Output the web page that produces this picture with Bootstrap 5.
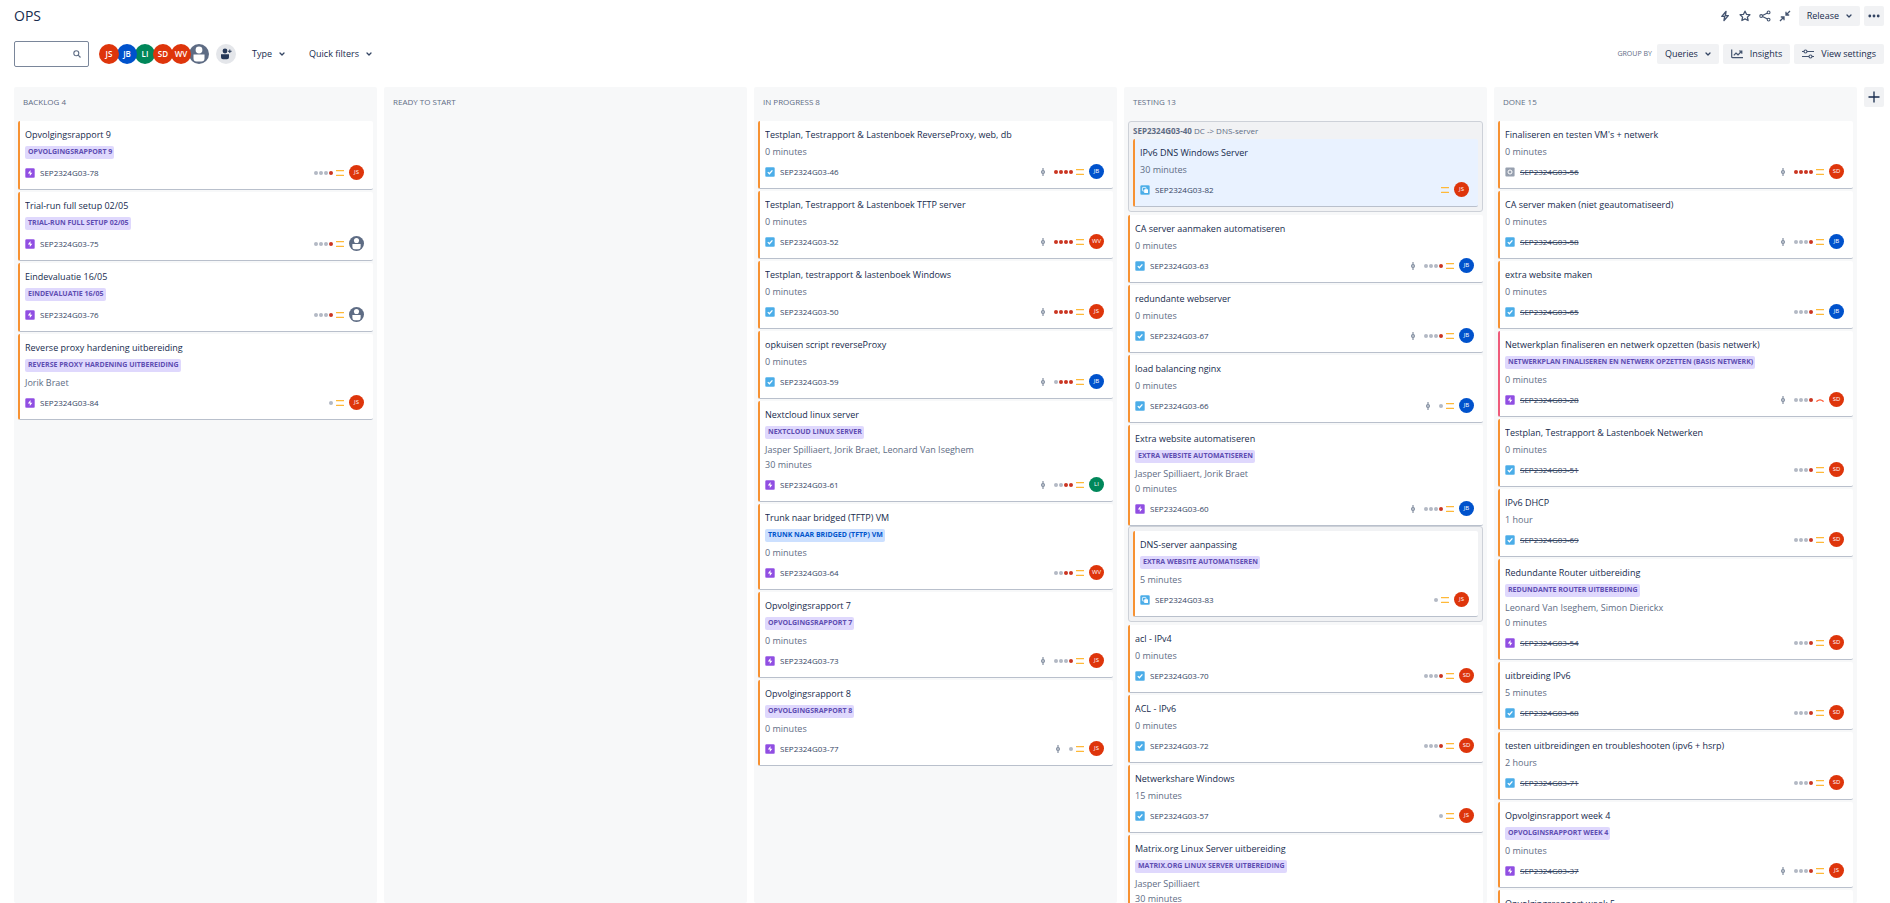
<!DOCTYPE html>
<html lang="en">
<head>
<meta charset="utf-8">
<meta name="viewport" content="width=device-width, initial-scale=1">
<title>OPS board</title>
<link href="https://cdn.jsdelivr.net/npm/bootstrap@5.3.0/dist/css/bootstrap.min.css" rel="stylesheet">
<style>
  :root { --ink: #172b4d; --muted: #5e6c84; --line: #b9c0cc; --surface: #f7f8f9; --button: #f1f2f4; }
  body { font-family: "Open Sans", "Noto Sans", sans-serif; font-size: 9px; line-height: 14px; color: var(--ink); background: #fff; }
  svg { display: block; flex: none; }
  .page { padding: 6px 6px 0 14px; }
  .board-title { font-size: 14px; line-height: 20px; font-weight: 400; }
  .tools { margin-top: 15px; height: 26px; }
  .search { width: 75px; height: 26px; border: 1px solid #7a869a; border-radius: 2px; padding: 0 7px 0 5px; }
  .search input { border: 0; outline: 0; min-width: 0; width: 100%; background: none; font-size: 9px; }
  .people { margin-left: 10px; }
  .face { width: 20px; height: 20px; border: 0; padding: 0; border-radius: 50%; color: #fff; font-size: 8px; line-height: 20px; font-weight: 600; text-align: center; position: relative; }
  .people .face + .face { margin-left: -2px; }
  .face-red { background: #de350b; } .face-blue { background: #0052cc; } .face-green { background: #00875a; } .face-none { background: #fff; }
  .add-person { width: 20px; height: 20px; margin-left: 7px; border: 0; padding: 0; border-radius: 50%; background: #e4e6ea; }
  .btn-tool { height: 20px; padding: 0 8px; gap: 7px; font-size: 9px; line-height: 20px; border: 0; border-radius: 2px; color: var(--ink); background: var(--button); }
  .btn-tool:hover { background: #dfe1e6; }
  .btn-clear { background: none; }
  .btn-square { width: 20px; padding: 0; }
  .btn-icon { width: 20px; height: 20px; padding: 0; border: 0; color: #44546f; }
  .group-label { font-size: 7px; color: var(--muted); margin-right: 5px; }
  .board { gap: 7px; margin-top: 20px; }
  .lane { flex: 1 1 0; min-width: 0; background: var(--surface); border-radius: 2px; padding: 0 4px; }
  .lane-title { font-size: 8px; line-height: 14px; font-weight: 400; color: var(--muted); margin: 0; padding: 8px 5px 12px; }
  .issue { display: flex; flex-direction: column; background: #fff; border-left: 2px solid #f79233; border-bottom: 1px solid var(--line); border-radius: 2px; padding: 7px 9px 9px 5px; margin-bottom: 2px; }
  .issue.high { border-left-color: #ef5c7b; }
  .issue.selected { background: #e9f2ff; }
  .issue-title { font-size: 9px; line-height: 14px; font-weight: 400; margin: 0; }
  .epic { align-self: flex-start; margin: 4px 0 1px; height: 13px; padding: 0 2px 0 3px; border-radius: 2px; font-size: 7px; line-height: 12px; font-weight: 700; text-transform: uppercase; background: #dfd8fd; color: #5e4db2; }
  .epic.blue { background: #cce0ff; color: #0055cc; }
  .facts { margin-top: 2px; color: var(--muted); line-height: 15px; }
  .issue-foot { margin-top: 5px; height: 15px; }
  .issue-key { margin-left: 5px; font-size: 8px; color: #344563; text-decoration: none; }
  .done .issue-key { text-decoration: line-through; }
  .days { gap: 1px; margin: 0 3px 0 8px; }
  .days i { width: 4px; height: 4px; border-radius: 50%; background: #b3b9c4; }
  .days i.old { background: #ca3521; }
  .issue-foot .face { width: 15px; height: 15px; margin-left: 5px; font-size: 6px; line-height: 15px; font-weight: 500; }
  .family { background: var(--button); border: 1px solid #cdd1d8; border-radius: 3px; padding: 0 4px 4px; margin-bottom: 3px; }
  .family .issue { margin-bottom: 0; }
  .family-title { font-size: 8px; line-height: 17px; color: var(--muted); margin: 0; }
  .issue + .family { margin-top: -2px; padding-top: 4px; }
</style>
</head>
<body>
<svg width="0" height="0" class="position-absolute" aria-hidden="true">
  <symbol id="chev" viewBox="0 0 6 6"><path d="M1 2l2 2 2-2" fill="none" stroke="#344563" stroke-width="1.3" stroke-linecap="round" stroke-linejoin="round"/></symbol>
  <symbol id="task" viewBox="0 0 10 10"><rect width="10" height="10" rx="1.5" fill="#a9d6f5"/><rect x=".6" y=".6" width="8.8" height="8.8" rx="1" fill="#4bade8"/><path d="M2.8 5.1l1.6 1.6 3-3.3" fill="none" stroke="#fff" stroke-width="1.3"/></symbol>
  <symbol id="epic" viewBox="0 0 10 10"><rect width="10" height="10" rx="1.5" fill="#c9a8f2"/><rect x=".6" y=".6" width="8.8" height="8.8" rx="1" fill="#904ee2"/><path d="M5.5 2L2.8 5.4h2v2.7L7.4 4.7h-1.9z" fill="#fff"/></symbol>
  <symbol id="sub" viewBox="0 0 10 10"><rect width="10" height="10" rx="1.5" fill="#a9d6f5"/><rect x=".6" y=".6" width="8.8" height="8.8" rx="1" fill="#4bade8"/><rect x="2.4" y="2.4" width="3.6" height="3.6" rx=".6" fill="none" stroke="#fff" stroke-width=".8"/><rect x="4.2" y="4.2" width="3.8" height="3.8" rx=".6" fill="#fff"/></symbol>
  <symbol id="other" viewBox="0 0 10 10"><rect x=".4" y=".4" width="9.2" height="9.2" rx="1" fill="#97a0af"/><circle cx="5" cy="5" r="2" fill="none" stroke="#fff" stroke-width="1"/></symbol>
  <symbol id="medium" viewBox="0 0 8 6"><path d="M.5 .5h7M.5 5.500h7" stroke="#ffb938" stroke-width="1.300" stroke-linecap="round"/></symbol>
  <symbol id="high" viewBox="0 0 8 6"><path d="M.8 4.200Q4 1.500 7.200 4.200" fill="none" stroke="#ff5630" stroke-width="1.300" stroke-linecap="round"/></symbol>
  <symbol id="dev" viewBox="0 0 6 10"><path d="M3 1v8" stroke="#8590a2" stroke-width="1.200"/><circle cx="3" cy="5" r="1.500" fill="#c4c9d2" stroke="#8590a2" stroke-width="1.100"/></symbol>
  <symbol id="nobody" viewBox="0 0 20 20"><circle cx="10" cy="10" r="10" fill="#5e6c84"/><circle cx="10" cy="6" r="3.400" fill="#fff"/><path d="M4.500 10.500h11v4a3 3 0 0 1-3 3h-5a3 3 0 0 1-3-3z" fill="#fff"/></symbol>
</svg>

<div class="page vh-100 d-flex flex-column overflow-hidden">
  <header class="d-flex align-items-center">
    <h1 class="board-title m-0 me-auto">OPS</h1>
    <button class="btn btn-icon d-flex align-items-center justify-content-center" type="button" aria-label="Automation"><svg width="12" height="12" viewBox="0 0 12 12"><path d="M7 1.500L2.800 6.400h2.900L5 10.600l4.300-5H6.400z" fill="none" stroke="currentColor" stroke-width="1.400" stroke-linejoin="round"/></svg></button>
    <button class="btn btn-icon d-flex align-items-center justify-content-center" type="button" aria-label="Star"><svg width="12" height="12" viewBox="0 0 12 12"><path d="M6 1.200l1.500 3.100 3.400.4-2.500 2.400.7 3.400L6 8.900l-3.100 1.600.7-3.400L1.100 4.700l3.400-.4z" fill="none" stroke="currentColor" stroke-width="1.300" stroke-linejoin="round"/></svg></button>
    <button class="btn btn-icon d-flex align-items-center justify-content-center" type="button" aria-label="Share"><svg width="12" height="12" viewBox="0 0 12 12"><path d="M9.500 2.500L2.500 6l7 3.500" fill="none" stroke="currentColor" stroke-width="1.200"/><circle cx="9.600" cy="2.400" r="1.400" fill="#fff" stroke="currentColor" stroke-width="1.100"/><circle cx="2.200" cy="6" r="1.400" fill="#fff" stroke="currentColor" stroke-width="1.100"/><circle cx="9.600" cy="9.600" r="1.400" fill="#fff" stroke="currentColor" stroke-width="1.100"/></svg></button>
    <button class="btn btn-icon d-flex align-items-center justify-content-center" type="button" aria-label="Leave full screen"><svg width="12" height="12" viewBox="0 0 12 12"><path d="M11 1L7.500 4.500M7 1.800V5h3.200M1 11l3.500-3.500M1.800 7H5v3.200" fill="none" stroke="currentColor" stroke-width="1.300"/></svg></button>
    <button class="btn btn-tool d-flex align-items-center ms-1 me-1" type="button">Release <svg width="6" height="6"><use href="#chev"/></svg></button>
    <button class="btn btn-tool btn-square d-flex align-items-center justify-content-center" type="button" aria-label="More"><svg width="12" height="4" viewBox="0 0 12 4" fill="#344563"><circle cx="1.800" cy="2" r="1.400"/><circle cx="6" cy="2" r="1.400"/><circle cx="10.200" cy="2" r="1.400"/></svg></button>
  </header>

  <div class="tools d-flex align-items-center">
    <div class="search d-flex align-items-center"><input type="search" aria-label="Search this board"><svg width="8" height="8" viewBox="0 0 8 8"><circle cx="3.300" cy="3.300" r="2.500" fill="none" stroke="#5e6c84" stroke-width="1.100"/><path d="M5.200 5.200L7.500 7.500" stroke="#5e6c84" stroke-width="1.200"/></svg></div>
    <div class="people d-flex">
      <button type="button" class="face face-red z-3">JS</button>
      <button type="button" class="face face-blue z-2">JB</button>
      <button type="button" class="face face-green z-1">LI</button>
      <button type="button" class="face face-red z-1">SD</button>
      <button type="button" class="face face-red z-1">WV</button>
      <button type="button" class="face face-none z-0" aria-label="Unassigned"><svg width="20" height="20"><use href="#nobody"/></svg></button>
    </div>
    <button type="button" class="add-person d-flex align-items-center justify-content-center" aria-label="Add people"><svg width="12" height="12" viewBox="0 0 12 12" fill="#253858"><circle cx="5" cy="3" r="2.400"/><path d="M1 6.200h8v3a2 2 0 0 1-2 2H3a2 2 0 0 1-2-2zM9.300 1.500h1v1.300h1.300v1h-1.300v1.300h-1V3.800H8v-1h1.300z"/></svg></button>
    <button type="button" class="btn btn-tool btn-clear d-flex align-items-center ms-2">Type <svg width="6" height="6"><use href="#chev"/></svg></button>
    <button type="button" class="btn btn-tool btn-clear d-flex align-items-center ms-2">Quick filters <svg width="6" height="6"><use href="#chev"/></svg></button>
    <span class="group-label ms-auto">GROUP BY</span>
    <button type="button" class="btn btn-tool d-flex align-items-center me-1">Queries <svg width="6" height="6"><use href="#chev"/></svg></button>
    <button type="button" class="btn btn-tool d-flex align-items-center me-1"><svg width="12" height="10" viewBox="0 0 12 10"><path d="M.7.500v7.200a1 1 0 0 0 1 1H12M2.800 6.300L5 4l2 1.800L10.300 2.500M8 2h2.800v2.800" fill="none" stroke="#44546f" stroke-width="1.200"/></svg>Insights</button>
    <button type="button" class="btn btn-tool d-flex align-items-center"><svg width="12" height="10" viewBox="0 0 12 10"><path d="M0 2.500h12M0 7.500h12" stroke="#44546f" stroke-width="1.200"/><circle cx="3.500" cy="2.500" r="1.500" fill="#fff" stroke="#44546f" stroke-width="1.100"/><circle cx="8.500" cy="7.500" r="1.500" fill="#fff" stroke="#44546f" stroke-width="1.100"/></svg>View settings</button>
  </div>

  <main class="board d-flex flex-fill overflow-hidden" id="board">
    <button type="button" class="btn btn-tool btn-square d-flex align-items-center justify-content-center order-last flex-shrink-0" aria-label="Add column"><svg width="12" height="12" viewBox="0 0 12 12"><path d="M6 .500v11M.500 6h11" stroke="#172b4d" stroke-width="1.300"/></svg></button>
  </main>
</div>

<script>
  // Each issue: title, key number, type, days in column ("g" fresh, "r" old), assignee, extras.
  const lanes = [
    { name: "Backlog 4", issues: [
      { t: "Opvolgingsrapport 9", k: 78, y: "epic", d: "gggr", a: "JS", e: 1 },
      { t: "Trial-run full setup 02/05", k: 75, y: "epic", d: "gggr", e: 1 },
      { t: "Eindevaluatie 16/05", k: 76, y: "epic", d: "gggr", e: 1 },
      { t: "Reverse proxy hardening uitbereiding", k: 84, y: "epic", d: "g", a: "JS", e: 1, f: ["Jorik Braet"] } ] },
    { name: "Ready to start", issues: [] },
    { name: "In progress 8", issues: [
      { t: "Testplan, Testrapport & Lastenboek ReverseProxy, web, db", k: 46, y: "task", d: "rrrr", a: "JB", v: 1, f: ["0 minutes"] },
      { t: "Testplan, Testrapport & Lastenboek TFTP server", k: 52, y: "task", d: "rrrr", a: "WV", v: 1, f: ["0 minutes"] },
      { t: "Testplan, testrapport & lastenboek Windows", k: 50, y: "task", d: "rrrr", a: "JS", v: 1, f: ["0 minutes"] },
      { t: "opkuisen script reverseProxy", k: 59, y: "task", d: "grrr", a: "JB", v: 1, f: ["0 minutes"] },
      { t: "Nextcloud linux server", k: 61, y: "epic", d: "ggrr", a: "LI", v: 1, e: 1, f: ["Jasper Spilliaert, Jorik Braet, Leonard Van Iseghem", "30 minutes"] },
      { t: "Trunk naar bridged (TFTP) VM", k: 64, y: "epic", d: "ggrr", a: "WV", e: "blue", f: ["0 minutes"] },
      { t: "Opvolgingsrapport 7", k: 73, y: "epic", d: "gggr", a: "JS", v: 1, e: 1, f: ["0 minutes"] },
      { t: "Opvolgingsrapport 8", k: 77, y: "epic", d: "g", a: "JS", v: 1, e: 1, f: ["0 minutes"] } ] },
    { name: "Testing 13", issues: [
      { family: "<strong>SEP2324G03-40</strong> DC -&gt; DNS-server", child: { t: "IPv6 DNS Windows Server", k: 82, y: "sub", d: "", a: "JS", c: "selected", f: ["30 minutes"] } },
      { t: "CA server aanmaken automatiseren", k: 63, y: "task", d: "gggr", a: "JB", v: 1, f: ["0 minutes"] },
      { t: "redundante webserver", k: 67, y: "task", d: "gggr", a: "JB", v: 1, f: ["0 minutes"] },
      { t: "load balancing nginx", k: 66, y: "task", d: "g", a: "JB", v: 1, f: ["0 minutes"] },
      { t: "Extra website automatiseren", k: 60, y: "epic", d: "gggr", a: "JB", v: 1, e: 1, f: ["Jasper Spilliaert, Jorik Braet", "0 minutes"] },
      { family: "", child: { t: "DNS-server aanpassing", k: 83, y: "sub", d: "g", a: "JS", e: 1, label: "Extra website automatiseren", f: ["5 minutes"] } },
      { t: "acl - IPv4", k: 70, y: "task", d: "gggr", a: "SD", f: ["0 minutes"] },
      { t: "ACL - IPv6", k: 72, y: "task", d: "gggr", a: "SD", f: ["0 minutes"] },
      { t: "Netwerkshare Windows", k: 57, y: "task", d: "g", a: "JS", f: ["15 minutes"] },
      { t: "Matrix.org Linux Server uitbereiding", k: 62, y: "epic", d: "gggr", a: "JS", e: 1, f: ["Jasper Spilliaert", "30 minutes"] } ] },
    { name: "Done 15", done: 1, issues: [
      { t: "Finaliseren en testen VM's + netwerk", k: 56, y: "other", d: "rrrr", a: "SD", v: 1, f: ["0 minutes"] },
      { t: "CA server maken (niet geautomatiseerd)", k: 58, y: "task", d: "gggr", a: "JB", v: 1, f: ["0 minutes"] },
      { t: "extra website maken", k: 65, y: "task", d: "gggr", a: "JB", f: ["0 minutes"] },
      { t: "Netwerkplan finaliseren en netwerk opzetten (basis netwerk)", k: 28, y: "epic", d: "gggr", a: "SD", v: 1, e: 1, c: "high", f: ["0 minutes"] },
      { t: "Testplan, Testrapport & Lastenboek Netwerken", k: 51, y: "task", d: "gggr", a: "SD", f: ["0 minutes"] },
      { t: "IPv6 DHCP", k: 69, y: "task", d: "gggr", a: "SD", f: ["1 hour"] },
      { t: "Redundante Router uitbereiding", k: 54, y: "epic", d: "gggr", a: "SD", e: 1, f: ["Leonard Van Iseghem, Simon Dierickx", "0 minutes"] },
      { t: "uitbreiding IPv6", k: 68, y: "task", d: "gggr", a: "SD", f: ["5 minutes"] },
      { t: "testen uitbreidingen en troubleshooten (ipv6 + hsrp)", k: 71, y: "task", d: "gggr", a: "SD", f: ["2 hours"] },
      { t: "Opvolginsrapport week 4", k: 37, y: "epic", d: "gggr", a: "JS", v: 1, e: 1, f: ["0 minutes"] },
      { t: "Opvolgingsrapport week 5", k: 38, y: "epic", d: "gggr", a: "JS", v: 1, e: 1, f: ["0 minutes"] } ] }
  ];
  const colour = { JS: "red", SD: "red", WV: "red", JB: "blue", LI: "green" };
  const icon = (id, w, h) => `<svg width="${w}" height="${h}" aria-hidden="true"><use href="#${id}"/></svg>`;

  function card(i) {
    if (i.child) {
      const head = i.family ? `<p class="family-title text-truncate">${i.family}</p>` : "";
      return `<section class="family">${head}${card(i.child)}</section>`;
    }
    const title = i.t.replace("&", "&amp;");
    const epic = i.e ? `<span class="epic ${i.e === "blue" ? "blue" : ""}">${i.label || title}</span>` : "";
    const facts = i.f ? `<div class="facts">${i.f.map(x => `<div>${x}</div>`).join("")}</div>` : "";
    const days = [...i.d].map(x => `<i class="${x === "r" ? "old" : ""}"></i>`).join("");
    const face = i.a ? `<span class="face face-${colour[i.a]}">${i.a}</span>` : `<span class="face face-none">${icon("nobody", 15, 15)}</span>`;
    return `<article class="issue ${i.c || ""}"><h3 class="issue-title text-truncate">${title}</h3>${epic}${facts}
      <div class="issue-foot d-flex align-items-center">${icon(i.y, 10, 10)}<a href="#" class="issue-key me-auto">SEP2324G03-${i.k}</a>
      ${i.v ? icon("dev", 6, 10) : ""}<span class="days d-flex">${days}</span>${icon(i.c === "high" ? "high" : "medium", 8, 6)}${face}</div></article>`;
  }
  document.getElementById("board").insertAdjacentHTML("afterbegin", lanes.map(l =>
    `<section class="lane overflow-hidden ${l.done ? "done" : ""}"><h2 class="lane-title text-uppercase">${l.name}</h2>${l.issues.map(card).join("")}</section>`).join(""));
</script>
<script src="https://cdn.jsdelivr.net/npm/bootstrap@5.3.0/dist/js/bootstrap.bundle.min.js"></script>
</body>
</html>
